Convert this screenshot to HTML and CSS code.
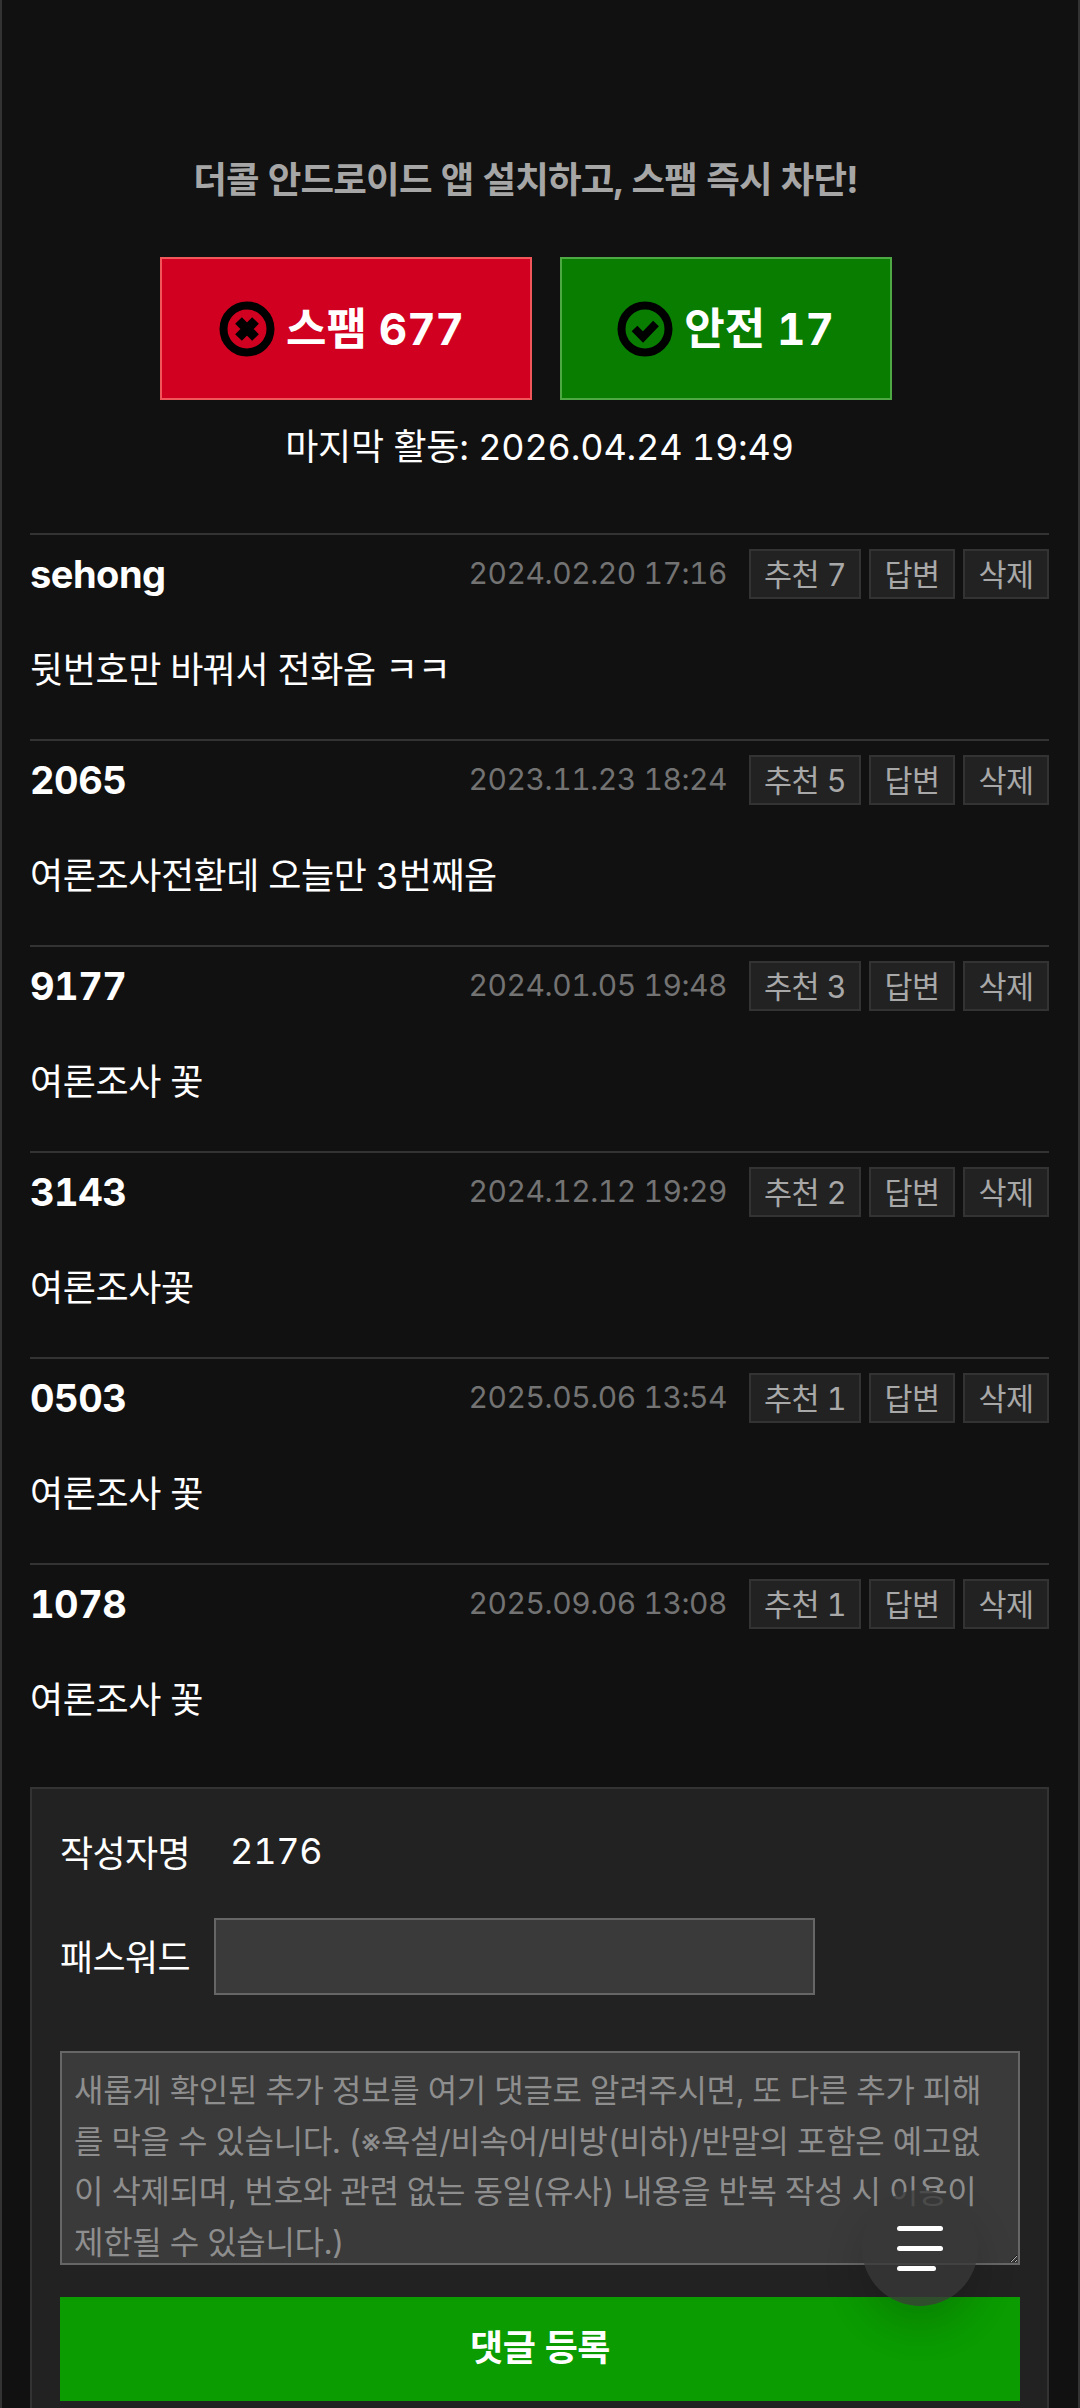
FILE: index.html
```html
<!DOCTYPE html>
<html lang="ko">
<head>
<meta charset="utf-8">
<title>더콜</title>
<link rel="stylesheet" href="styles.css">
</head>
<body>
<main class="page">
  <p class="promo">더콜 안드로이드 앱 설치하고, 스팸 즉시 차단!</p>
  <div class="votes">
    <button class="vote vote-spam">
      <svg class="vote-icon" viewBox="0 0 56 56"><circle cx="28" cy="28" r="23.5" fill="none" stroke="#000" stroke-width="8"/><path d="M19.5 19.5 36.5 36.5M36.5 19.5 19.5 36.5" stroke="#000" stroke-width="9.5" fill="none"/></svg>
      <span class="vote-label">스팸 677</span>
    </button>
    <button class="vote vote-safe">
      <svg class="vote-icon" viewBox="0 0 56 56"><circle cx="28" cy="28" r="23.5" fill="none" stroke="#000" stroke-width="8"/><path d="M17.5 27.5 26 36 39 22.5" stroke="#000" stroke-width="8" fill="none"/></svg>
      <span class="vote-label">안전 17</span>
    </button>
  </div>
  <p class="activity">마지막 활동: 2026.04.24 19:49</p>

  <section class="comments">
    <article class="comment">
      <header class="comment-head"><strong class="author">sehong</strong><time class="date">2024.02.20 17:16</time><div class="actions"><button class="chip chip-rec">추천 7</button><button class="chip chip-sm">답변</button><button class="chip chip-sm">삭제</button></div></header>
      <p class="body">뒷번호만 바꿔서 전화옴 ㅋㅋ</p>
    </article>
    <article class="comment">
      <header class="comment-head"><strong class="author">2065</strong><time class="date">2023.11.23 18:24</time><div class="actions"><button class="chip chip-rec">추천 5</button><button class="chip chip-sm">답변</button><button class="chip chip-sm">삭제</button></div></header>
      <p class="body">여론조사전환데 오늘만 3번째옴</p>
    </article>
    <article class="comment">
      <header class="comment-head"><strong class="author">9177</strong><time class="date">2024.01.05 19:48</time><div class="actions"><button class="chip chip-rec">추천 3</button><button class="chip chip-sm">답변</button><button class="chip chip-sm">삭제</button></div></header>
      <p class="body">여론조사 꽃</p>
    </article>
    <article class="comment">
      <header class="comment-head"><strong class="author">3143</strong><time class="date">2024.12.12 19:29</time><div class="actions"><button class="chip chip-rec">추천 2</button><button class="chip chip-sm">답변</button><button class="chip chip-sm">삭제</button></div></header>
      <p class="body">여론조사꽃</p>
    </article>
    <article class="comment">
      <header class="comment-head"><strong class="author">0503</strong><time class="date">2025.05.06 13:54</time><div class="actions"><button class="chip chip-rec">추천 1</button><button class="chip chip-sm">답변</button><button class="chip chip-sm">삭제</button></div></header>
      <p class="body">여론조사 꽃</p>
    </article>
    <article class="comment">
      <header class="comment-head"><strong class="author">1078</strong><time class="date">2025.09.06 13:08</time><div class="actions"><button class="chip chip-rec">추천 1</button><button class="chip chip-sm">답변</button><button class="chip chip-sm">삭제</button></div></header>
      <p class="body">여론조사 꽃</p>
    </article>
  </section>

  <form class="reply">
    <div class="field field-name"><span class="label">작성자명</span><span class="value">2176</span></div>
    <div class="field field-pass"><label class="label" for="pw">패스워드</label><input class="input" id="pw" type="password"></div>
    <textarea class="textarea" placeholder="새롭게 확인된 추가 정보를 여기 댓글로 알려주시면, 또 다른 추가 피해를 막을 수 있습니다. (※욕설/비속어/비방(비하)/반말의 포함은 예고없이 삭제되며, 번호와 관련 없는 동일(유사) 내용을 반복 작성 시 이용이 제한될 수 있습니다.)"></textarea>
    <button class="submit" type="button">댓글 등록</button>
  </form>
</main>
<button class="fab" aria-label="메뉴"><span class="bar"></span><span class="bar"></span><span class="bar bar-short"></span></button>
</body>
</html>
```

FILE: styles.css
```css
* { box-sizing: border-box; }
html, body { margin: 0; padding: 0; height: 2408px; overflow: hidden; background: #111; }
body { font-family: Inter, "Noto Sans CJK KR", "Noto Sans", sans-serif; color: #fff; font-variant-numeric: tabular-nums; }
button, input, textarea { font-family: inherit; font-variant-numeric: inherit; }
.page { height: 2408px; overflow: hidden; padding: 157px 29px 0 28px; border-left: 2px solid #333; border-right: 2px solid #333; margin: 0; }
.promo { margin: 0 28px 0 0; height: 46px; line-height: 46px; text-align: center; font-size: 36.5px; font-weight: 700; color: #a6a6a6; letter-spacing: -0.8px; }
.votes { display: flex; justify-content: center; gap: 28px; margin: 54px 28px 0 0; }
.vote { display: flex; align-items: center; justify-content: center; gap: 11px; height: 143px; border-width: 2px; border-style: solid; color: #fff; font-size: 44px; font-weight: 700; padding: 0; }
.vote-label { position: relative; top: -3px; }
.vote-spam { width: 372px; background: #d20020; border-color: #f0565a; padding-right: 8px; }
.vote-safe { width: 332px; background: #087d00; border-color: #4ea843; }
.vote-icon { width: 56px; height: 56px; flex: none; }
.activity { margin: 24px 0 0; height: 46px; line-height: 46px; text-align: center; font-size: 36px; letter-spacing: -0.2px; }
.comments { margin-top: 63px; }
.comment { height: 206px; border-top: 2px solid #333; padding-top: 14px; }
.comment-head { display: flex; align-items: center; height: 50px; }
.author { flex: 1; font-size: 38px; font-weight: 700; line-height: 50px; letter-spacing: -0.5px; }
.date { font-size: 30px; color: #737373; margin-right: 22px; padding-bottom: 3px; letter-spacing: -0.45px; }
.actions { display: flex; gap: 8px; }
.chip { height: 50px; background: #222; border: 2px solid #333; color: #a8a8a8; font-size: 30.5px; padding: 0 0 4px; letter-spacing: -0.5px; }
.chip-rec { width: 112px; }
.chip-sm { width: 86px; }
.body { margin: 46px 0 0; height: 50px; line-height: 50px; font-size: 36px; letter-spacing: -0.4px; }
.reply { margin-top: 18px; background: #222; border: 2px solid #333; height: 640px; padding: 0 28px; }
.field { display: flex; align-items: center; }
.field-name { height: 64px; margin-top: 31px; gap: 40px; }
.field-pass { height: 77px; margin-top: 34px; gap: 24px; }
.label { font-size: 36px; letter-spacing: -0.6px; padding-bottom: 3px; }
.value { font-size: 36px; padding-bottom: 3px; letter-spacing: -0.3px; }
.input { width: 601px; height: 77px; background: #3a3a3a; border: 2px solid #666; padding: 0; }
.textarea { display: block; width: 960px; height: 214px; margin-top: 56px; background: #3a3a3a; border: 2px solid #666; padding: 13px 12px 0; font-size: 32px; line-height: 50.7px; color: #fff; resize: both; overflow: hidden; letter-spacing: -0.3px; }
.textarea::placeholder { color: #8e8e8e; opacity: 1; }
.submit { display: block; width: 960px; height: 104px; margin-top: 32px; background: #0a9c00; border: 0; color: #fff; font-size: 36px; font-weight: 700; letter-spacing: -0.4px; padding: 0 0 8px; }
.fab { position: fixed; left: 862px; top: 2190px; width: 116px; height: 116px; border-radius: 50%; border: 0; padding: 0 0 0 35px; background: rgba(56,56,56,.78); box-shadow: 0 20px 40px rgba(0,0,0,.16); display: flex; flex-direction: column; justify-content: center; align-items: flex-start; gap: 15px; }
.bar { display: block; width: 46px; height: 5px; border-radius: 3px; background: #fff; }
.bar-short { width: 39px; }
```
